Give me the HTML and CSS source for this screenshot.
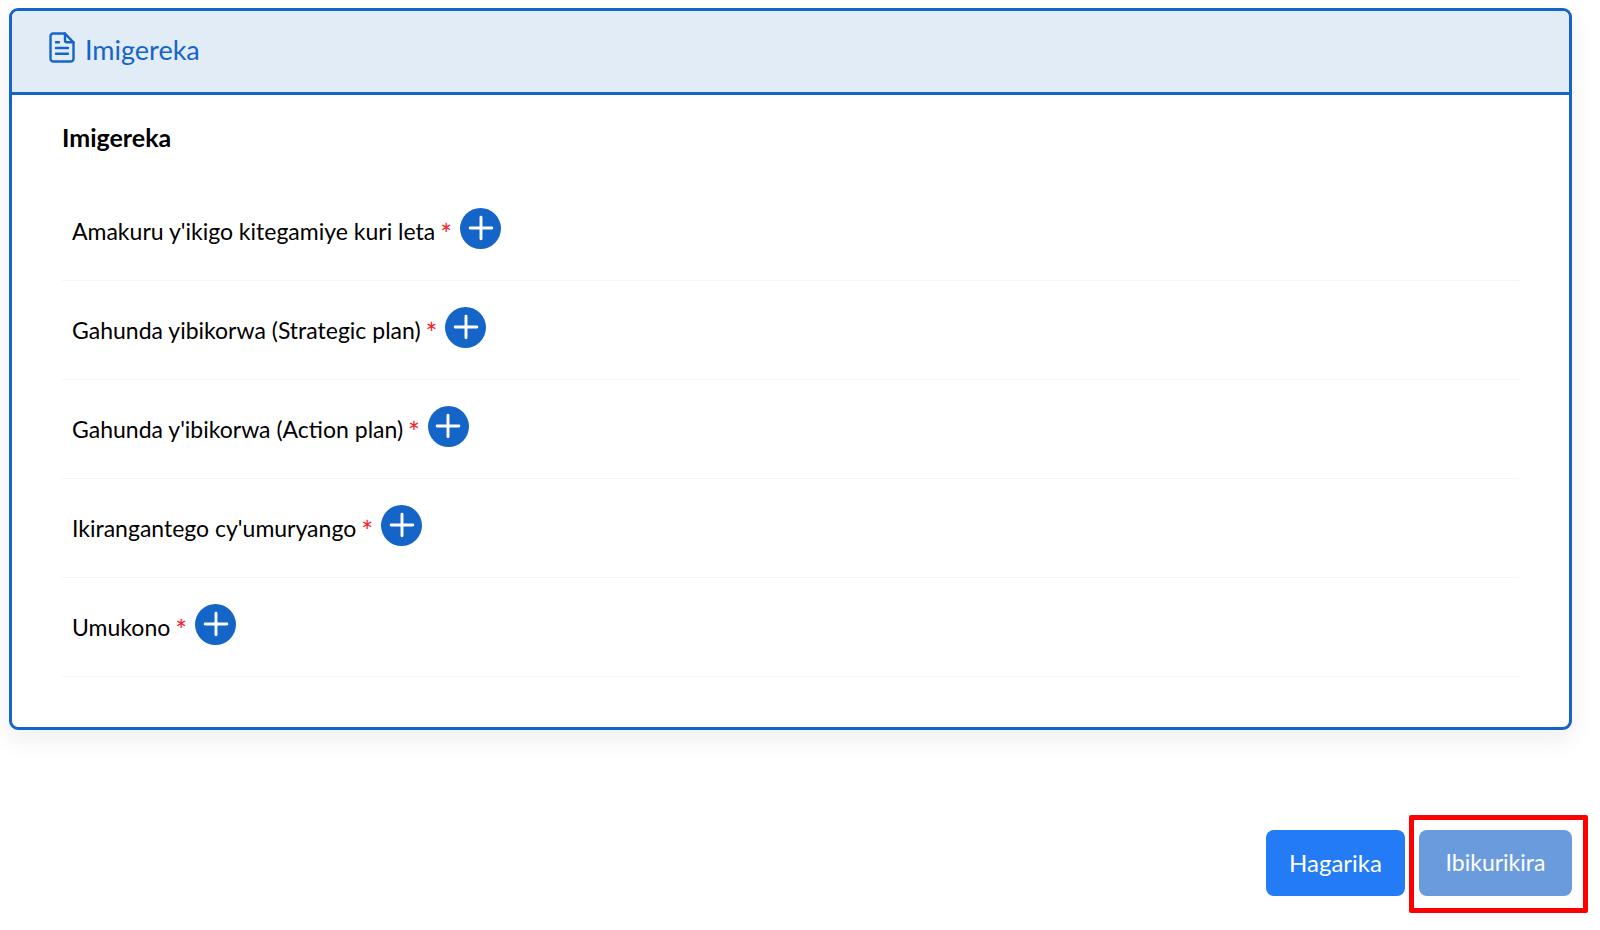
FILE: index.html
```html
<!DOCTYPE html>
<html lang="rw">
<head>
<meta charset="utf-8">
<title>Imigereka</title>
<link rel="stylesheet" href="styles.css">
</head>
<body>
<section class="card">
  <header class="card-head">
    <svg class="doc-icon" viewBox="0 0 26 30" width="26" height="31" preserveAspectRatio="none" fill="none" stroke="#1565c8" stroke-width="2.4" stroke-linejoin="round" stroke-linecap="round">
      <path d="M4 1.500h12l8.500 8.500v16a2.500 2.500 0 0 1-2.500 2.500H4A2.500 2.500 0 0 1 1.500 26V4A2.500 2.500 0 0 1 4 1.500z"/>
      <path d="M16 1.500V8a2 2 0 0 0 2 2h6.500"/>
      <path d="M7 10h3M7 15.500h12M7 21h12"/>
    </svg>
    <span class="card-title">Imigereka</span>
  </header>
  <div class="card-body">
    <h2 class="section-title">Imigereka</h2>
    <div class="row"><span class="label">Amakuru y'ikigo kitegamiye kuri leta</span><span class="req">*</span><button class="add" aria-label="add"><svg viewBox="0 0 24 24" width="26" height="26"><path d="M12 2v20M2 12h20" stroke="#fff" stroke-width="2.700" stroke-linecap="round"/></svg></button></div>
    <div class="row"><span class="label">Gahunda yibikorwa (Strategic plan)</span><span class="req">*</span><button class="add" aria-label="add"><svg viewBox="0 0 24 24" width="26" height="26"><path d="M12 2v20M2 12h20" stroke="#fff" stroke-width="2.700" stroke-linecap="round"/></svg></button></div>
    <div class="row"><span class="label">Gahunda y'ibikorwa (Action plan)</span><span class="req">*</span><button class="add" aria-label="add"><svg viewBox="0 0 24 24" width="26" height="26"><path d="M12 2v20M2 12h20" stroke="#fff" stroke-width="2.700" stroke-linecap="round"/></svg></button></div>
    <div class="row"><span class="label">Ikirangantego cy'umuryango</span><span class="req">*</span><button class="add" aria-label="add"><svg viewBox="0 0 24 24" width="26" height="26"><path d="M12 2v20M2 12h20" stroke="#fff" stroke-width="2.700" stroke-linecap="round"/></svg></button></div>
    <div class="row"><span class="label">Umukono</span><span class="req">*</span><button class="add" aria-label="add"><svg viewBox="0 0 24 24" width="26" height="26"><path d="M12 2v20M2 12h20" stroke="#fff" stroke-width="2.700" stroke-linecap="round"/></svg></button></div>
  </div>
</section>
<footer class="actions">
  <button class="btn btn-cancel">Hagarika</button>
  <button class="btn btn-next">Ibikurikira<span class="highlight"></span></button>
</footer>
</body>
</html>
```

FILE: styles.css
```css
* { box-sizing: border-box; }
html, body { height: 100%; }
body {
  margin: 0;
  padding: 8px 28px 0 9px;
  background: #fff;
  color: #000;
  font-family: "Lato", "Noto Sans", sans-serif;
  overflow: hidden;
}
.card {
  height: 722px;
  border: 3px solid #1565c8;
  border-radius: 9px;
  background: #fff;
  box-shadow: 0 10px 24px rgba(0, 0, 0, 0.07);
  overflow: hidden;
}
.card-head {
  height: 84px;
  display: flex;
  align-items: center;
  gap: 10px;
  padding: 0 0 4px 37px;
  background: #e2ecf7;
  border-bottom: 3px solid #1565c8;
}
.doc-icon { flex: none; margin-top: -4px; }
.card-title {
  font-size: 27px;
  color: #1565c8;
}
.card-body { padding: 27px 50px 0 50px; }
.section-title {
  margin: 0 0 30px;
  font-size: 25px;
  line-height: 30px;
  font-weight: 700;
}
.row {
  height: 99px;
  display: flex;
  align-items: center;
  padding: 0 10px;
  border-bottom: 1px solid #f5f5f5;
}
.label { font-size: 23px; }
.req {
  margin: 6px 0 0 5px;
  font-size: 28px;
  line-height: 1;
  color: #f5222d;
}
.add {
  width: 41px;
  height: 41px;
  margin: -6px 0 0 8px;
  padding: 0;
  display: flex;
  align-items: center;
  justify-content: center;
  border: 0;
  border-radius: 50%;
  background: #1565c8;
}
.actions {
  display: flex;
  justify-content: flex-end;
  gap: 14px;
  margin-top: 100px;
}
.btn {
  position: relative;
  height: 66px;
  padding: 0 0 2px;
  border: 0;
  border-radius: 8px;
  color: #fff;
  font-family: inherit;
  font-size: 24px;
}
.btn-cancel { width: 139px; background: #237bf6; }
.btn-next { width: 153px; background: #6a9bdd; font-size: 23px; }
.highlight {
  position: absolute;
  top: -15px;
  left: -10px;
  width: 179px;
  height: 98px;
  border: 5px solid #ff0000;
  border-radius: 2px;
  pointer-events: none;
}
```
